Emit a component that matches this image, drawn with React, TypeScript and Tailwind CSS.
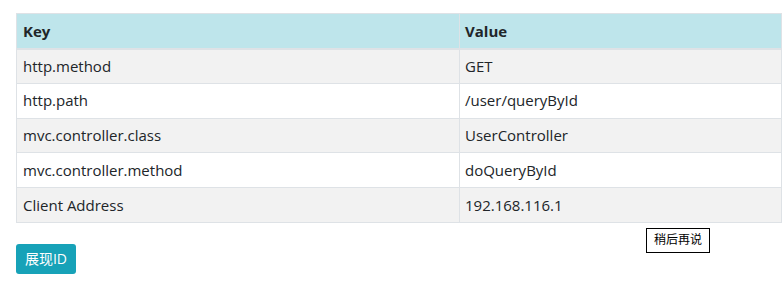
import React from "react";

const rows: [string, string][] = [
  ["http.method", "GET"],
  ["http.path", "/user/queryById"],
  ["mvc.controller.class", "UserController"],
  ["mvc.controller.method", "doQueryById"],
  ["Client Address", "192.168.116.1"],
];

export default function App() {
  return (
    <div
      className="w-[782px] h-[285px] bg-white pl-4 pt-[13px] text-[#212529]"
      style={{ fontFamily: '"Open Sans", "Noto Sans CJK SC", sans-serif' }}
    >
      <table className="w-[766px] border-collapse text-[15px]">
        <thead>
          <tr className="bg-[#bee5eb]">
            <th className="w-[443px] h-[35px] border border-[#dee2e6] border-b-2 px-[6px] text-left font-bold align-middle">
              Key
            </th>
            <th className="h-[35px] border border-[#dee2e6] border-b-2 px-[5px] text-left font-bold align-middle">
              Value
            </th>
          </tr>
        </thead>
        <tbody>
          {rows.map(([k, v], i) => (
            <tr key={k} className={i % 2 === 0 ? "bg-[#f2f2f2]" : "bg-white"}>
              <td className="h-[34.8px] border border-[#dee2e6] px-[6px] align-middle">{k}</td>
              <td className="h-[34.8px] border border-[#dee2e6] px-[5px] align-middle">{v}</td>
            </tr>
          ))}
        </tbody>
      </table>
      <div className="relative mt-[21px] h-[30px]">
        <button className="h-[30px] w-[60px] rounded-[3px] bg-[#17a2b8] text-[14px] text-white flex items-center justify-center">
          展现ID
        </button>
        <div className="absolute left-[630px] top-[-16px] w-[64px] h-[25px] border border-black bg-white text-[12px] text-black flex items-center justify-center">
          稍后再说
        </div>
      </div>
    </div>
  );
}
